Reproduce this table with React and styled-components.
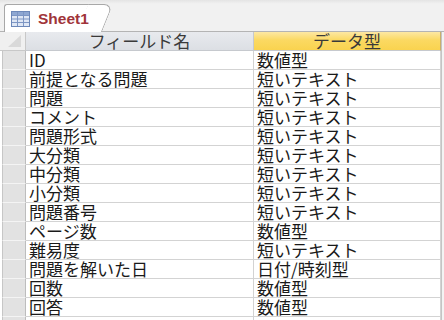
import React from "react";
import styled, { createGlobalStyle } from "styled-components";

const GlobalStyle = createGlobalStyle`
  html, body {
    margin: 0;
    padding: 0;
    background: #f3f3f3;
  }
  body {
    font-family: "Noto Sans CJK JP", "Noto Sans", sans-serif;
    overflow: hidden;
  }
`;

const Frame = styled.div`
  width: 444px;
  height: 320px;
  display: flex;
  flex-direction: column;
  overflow: hidden;
  background: #f3f3f3;
`;

const TabStrip = styled.div`
  height: 27px;
  flex: none;
  display: flex;
  align-items: flex-end;
  padding: 4px 0 0 4px;
  background: linear-gradient(#e4e4e4, #f1f1f1 12%, #f1f1f1);
  border-bottom: 1px solid #b4b4b4;
`;

const Tab = styled.div`
  position: relative;
  z-index: 0;
  height: 27px;
  width: 79px;
  margin-bottom: -1px;
  display: flex;
  align-items: center;
  gap: 8px;
  padding-left: 6px;
  background: #fff;
  border: 1px solid #a8a8a8;
  border-right: none;
  border-bottom: none;
  border-radius: 3px 0 0 0;

  &::after {
    content: "";
    position: absolute;
    z-index: -1;
    top: -1px;
    bottom: 0;
    right: -12px;
    width: 24px;
    background: #fff;
    border-top: 1px solid #a8a8a8;
    border-right: 1px solid #a8a8a8;
    border-top-right-radius: 9px;
    transform: skewX(-22deg);
    transform-origin: bottom left;
  }
`;

const TabLabel = styled.span`
  font-family: "Liberation Sans", Arial, sans-serif;
  font-weight: bold;
  font-size: 15.5px;
  color: #a0343a;
  line-height: 1;
  margin-top: 1px;
`;

const Grid = styled.div`
  display: grid;
  grid-template-columns: 26px 228px 187px;
  grid-auto-rows: 19px;
  width: 441px;
  background: #fff;
  border-right: 1px solid #c4c4c4;
  flex: none;
`;

const Corner = styled.div`
  position: relative;
  background: #f0f0f0;
  border-right: 1px solid #c8c8c8;
  border-bottom: 1px solid #c8c8c8;

  &::after {
    content: "";
    position: absolute;
    right: 4px;
    bottom: 3px;
    width: 0;
    height: 0;
    border-left: 13px solid transparent;
    border-bottom: 12px solid #d9d9d9;
  }
`;

const HeaderCell = styled.div`
  display: flex;
  align-items: center;
  justify-content: center;
  font-size: 17px;
  line-height: 18px;
  color: #3a3a3a;
  background: ${(p) =>
    p.$accent
      ? "linear-gradient(#fde8a4, #fbd962 45%, #f9d34f)"
      : "linear-gradient(#e8eaee, #dcdfe4)"};
  border-right: 1px solid ${(p) => (p.$accent ? "#c9b06a" : "#c6c9ce")};
  border-bottom: 1px solid #c6c9ce;
`;

const Selector = styled.div`
  background: #e2e2e2;
  border-left: 1px solid #c6c6c6;
  margin-left: 2px;
  border-right: 1px solid #bdbdbd;
  border-bottom: 1px solid #f4f4f4;
`;

const Cell = styled.div`
  display: flex;
  align-items: center;
  padding-left: 3px;
  font-size: 17px;
  line-height: 18px;
  color: #1a1a1a;
  white-space: nowrap;
  border-right: 1px solid #d3d3d3;
  border-bottom: 1px solid #d3d3d3;
`;

const TableIcon = () => (
  <svg width="19" height="16" viewBox="0 0 19 16">
    <rect x="0.5" y="0.5" width="18" height="15" fill="#dfe7f5" stroke="#6d88b9" />
    <rect x="1" y="1" width="17" height="3" fill="#8ea7d2" />
    <path
      d="M1 4.5H18M1 8H18M1 11.5H18M6.5 1V15M12.5 1V15"
      stroke="#7d96c4"
      strokeWidth="1"
    />
  </svg>
);

const fields = [
  ["ID", "数値型"],
  ["前提となる問題", "短いテキスト"],
  ["問題", "短いテキスト"],
  ["コメント", "短いテキスト"],
  ["問題形式", "短いテキスト"],
  ["大分類", "短いテキスト"],
  ["中分類", "短いテキスト"],
  ["小分類", "短いテキスト"],
  ["問題番号", "短いテキスト"],
  ["ページ数", "数値型"],
  ["難易度", "短いテキスト"],
  ["問題を解いた日", "日付/時刻型"],
  ["回数", "数値型"],
  ["回答", "数値型"],
  ["", ""],
];

export default function App() {
  return (
    <>
      <GlobalStyle />
      <Frame>
        <TabStrip>
          <Tab>
            <TableIcon />
            <TabLabel>Sheet1</TabLabel>
          </Tab>
        </TabStrip>
        <Grid>
          <Corner />
          <HeaderCell>フィールド名</HeaderCell>
          <HeaderCell $accent>データ型</HeaderCell>
          {fields.map(([name, type], i) => (
            <React.Fragment key={i}>
              <Selector />
              <Cell>{name}</Cell>
              <Cell>{type}</Cell>
            </React.Fragment>
          ))}
        </Grid>
      </Frame>
    </>
  );
}
